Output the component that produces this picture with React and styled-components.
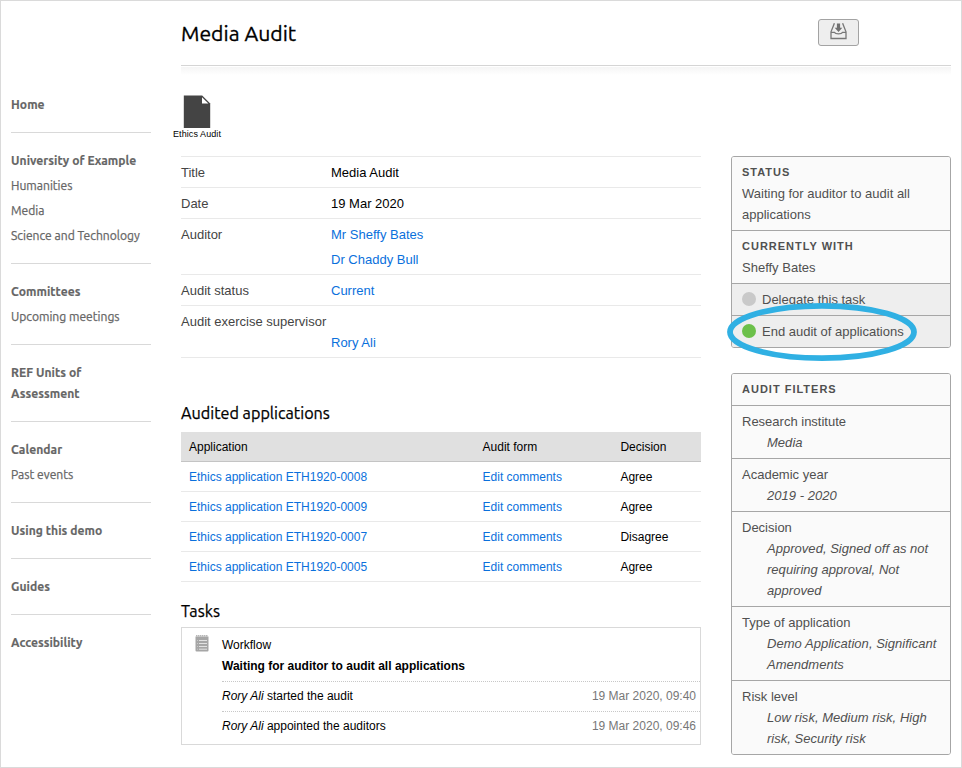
import React from "react";
import styled, { createGlobalStyle } from "styled-components";

const GlobalStyle = createGlobalStyle`
  *, *::before, *::after { box-sizing: border-box; }
  body {
    margin: 0;
    background: #fff;
    color: #000;
    font: 13px/21px "Liberation Sans", Arial, sans-serif;
  }
  a { color: #0a70dc; text-decoration: none; }
`;

const humanist = `Ubuntu, "Open Sans", "Noto Sans", sans-serif`;

const Page = styled.div`
  display: grid;
  grid-template-columns: 140px 770px;
  column-gap: 30px;
  width: 962px;
  height: 768px;
  padding-left: 10px;
  border: 1px solid #dadada;
  overflow: hidden;
`;

/* ---- Navigation ---- */

const Nav = styled.nav`
  padding-top: 93px;
  color: #666;
  font-family: ${humanist};
  font-size: 12.1px;
`;

const NavGroup = styled.section`
  display: flex;
  flex-direction: column;
  gap: 4px;
  padding-bottom: 17px;

  & + & {
    padding-top: 17px;
    border-top: 1px solid #d9d9d9;
  }
`;

const NavTitle = styled.strong`
  max-width: 130px;
  font-weight: 700;
  letter-spacing: 0.04px;
  -webkit-text-stroke: 0.15px;
`;

const NavItem = styled.span`
  white-space: nowrap;
  -webkit-text-stroke: 0.25px;
`;

/* ---- Page header ---- */

const Content = styled.div`
  display: flex;
  flex-direction: column;
`;

const Header = styled.header`
  display: flex;
  justify-content: space-between;
  align-items: center;
  height: 65px;
  padding-right: 92px;
  border-bottom: 1px solid #d5d5d5;
`;

const PageTitle = styled.h1`
  margin: 0;
  padding-bottom: 1px;
  font: 400 21.2px/28px ${humanist};
  -webkit-text-stroke: 0.3px;
`;

const HeaderShade = styled.div`
  height: 8px;
  margin-top: 1px;
  background: linear-gradient(#f5f5f5, #fff);
`;

const ArchiveButton = styled.button`
  display: flex;
  justify-content: center;
  align-items: flex-start;
  width: 41px;
  height: 27px;
  margin-top: -1px;
  padding: 3px 0 0;
  border: 1px solid #a3a3a3;
  border-radius: 3px;
  background: #eee;
`;

const Badge = styled.figure`
  display: flex;
  flex-direction: column;
  align-items: center;
  width: 50px;
  height: 81px;
  margin: 0 0 0 -9px;
  padding-top: 20px;
  font-size: 9px;
  line-height: 12px;
  letter-spacing: 0.08px;
  white-space: nowrap;
`;

const Columns = styled.div`
  display: grid;
  grid-template-columns: 520px 220px;
  justify-content: space-between;
`;

/* ---- Details ---- */

const Details = styled.dl`
  margin: 0;
  border-top: 1px solid #e9e9e9;
`;

const Detail = styled.div`
  display: grid;
  grid-template-columns: ${(p) => (p.$stacked ? "1fr" : "150px 1fr")};
  padding: 5px 0 4px;
  border-bottom: 1px solid #e9e9e9;
`;

const Term = styled.dt`
  color: #444;
`;

const Value = styled.dd`
  display: flex;
  flex-direction: column;
  gap: 4px;
  margin: 0 0 0 ${(p) => (p.$indent ? "150px" : "0")};
`;

const SectionTitle = styled.h2`
  margin: ${(p) => p.$top}px 0 ${(p) => p.$bottom}px;
  font: 400 16.2px/22px ${humanist};
  -webkit-text-stroke: 0.25px;
`;

/* ---- Applications table ---- */

const Table = styled.div`
  font-size: 12px;
`;

const TableRow = styled.div`
  display: grid;
  grid-template-columns: 293.6px 137.8px 1fr;
  height: 30px;
  padding: 1px 0 0 8px;
  line-height: 28px;
  border-bottom: 1px solid ${(p) => (p.$head ? "#c4c4c4" : "#e9e9e9")};
  background: ${(p) => (p.$head ? "#e0e0e0" : "transparent")};
`;

/* ---- Tasks ---- */

const TaskBox = styled.section`
  display: grid;
  grid-template-columns: 40px 1fr;
  height: 118px;
  padding-top: 6px;
  border: 1px solid #d9d9d9;
  font-size: 12px;
`;

const TaskIcon = styled.div`
  padding: 1px 0 0 12.5px;
`;

const TaskHeading = styled.div`
  padding: 1px 0 4px;
`;

const LogLine = styled.div`
  display: flex;
  justify-content: space-between;
  padding: 4px 4px 4px 0;
  border-top: 1px dotted #c8c8c8;
`;

const Stamp = styled.time`
  color: #777;
`;

/* ---- Side panels ---- */

const Aside = styled.aside`
  display: flex;
  flex-direction: column;
  gap: 25px;
  color: #505050;
`;

const Panel = styled.section`
  border: 1px solid #a6a6a6;
  border-radius: 3px;
  overflow: hidden;
`;

const PanelRow = styled.div`
  padding: 5px 10px;
  background: #fafafa;

  & + & { border-top: 1px solid #a6a6a6; }
`;

const PanelTitle = styled.h3`
  margin: 0;
  font-size: 11px;
  line-height: 21px;
  letter-spacing: 1px;
  text-transform: uppercase;
`;

const FilterValue = styled.div`
  padding-left: 25px;
  margin-right: -6px;
  font-style: italic;
  letter-spacing: 0.03px;
`;

const Action = styled(PanelRow)`
  display: flex;
  align-items: center;
  gap: 6px;
  background: #eee;
`;

const Dot = styled.span`
  width: 14px;
  height: 14px;
  margin-top: -1px;
  border-radius: 50%;
  background: ${(p) => p.$color};
`;

const StatusWrap = styled.div`
  position: relative;
`;

const Highlight = styled.svg`
  position: absolute;
  left: -5px;
  bottom: -14px;
  pointer-events: none;
`;

const navGroups = [
  ["Home"],
  ["University of Example", "Humanities", "Media", "Science and Technology"],
  ["Committees", "Upcoming meetings"],
  ["REF Units of Assessment"],
  ["Calendar", "Past events"],
  ["Using this demo"],
  ["Guides"],
  ["Accessibility"],
];

const applications = [
  ["ETH1920-0008", "Agree"],
  ["ETH1920-0009", "Agree"],
  ["ETH1920-0007", "Disagree"],
  ["ETH1920-0005", "Agree"],
];

const filters = [
  ["Research institute", "Media"],
  ["Academic year", "2019 - 2020"],
  ["Decision", "Approved, Signed off as not requiring approval, Not approved"],
  ["Type of application", "Demo Application, Significant Amendments"],
  ["Risk level", "Low risk, Medium risk, High risk, Security risk"],
];

const InboxIcon = () => (
  <svg width="17" height="17" viewBox="0 0 17 17" fill="none" stroke="#777" strokeWidth="1.3">
    <path d="M4.4 0.2 L1 8.8 V15.5 H16 V8.8 L12.6 0.2" />
    <path d="M1 9.4 H4.4 C5.6 11.4 11.4 11.4 12.6 9.4 H16" />
    <path d="M6.9 0.6 H10.1 V4.8 H12.3 L8.5 9 L4.7 4.8 H6.9 Z" fill="#707070" stroke="none" />
  </svg>
);

const DocumentIcon = () => (
  <svg width="28" height="33" viewBox="0 0 28 33">
    <path d="M0.8 0.5 H19.2 L27.2 8.5 V33 H0.8 Z" fill="#444" />
    <path d="M19 2.2 V8.6 H25.4 Z" fill="#fff" />
  </svg>
);

const NotepadIcon = () => (
  <svg width="14" height="17" viewBox="0 0 14 17">
    <path d="M0.5 1.5 H13.5 V15.5 Q13.5 16.5 12.5 16.5 H1.5 Q0.5 16.5 0.5 15.5 Z" fill="#a6a6a6" />
    <path d="M1.2 0.8 H13" stroke="#a6a6a6" strokeWidth="1.6" strokeDasharray="1.2 0.8" />
    <path d="M4 5.5 H12 M4 8.5 H12 M4 11.5 H12 M4 14.2 H12" stroke="#f0f0f0" strokeWidth="0.8" />
    <path d="M2 5.5 H3 M2 8.5 H3 M2 11.5 H3 M2 14.2 H3" stroke="#d0d0d0" strokeWidth="0.8" />
  </svg>
);

export default function App() {
  return (
    <Page>
      <GlobalStyle />
      <Nav>
        {navGroups.map(([title, ...items]) => (
          <NavGroup key={title}>
            <NavTitle>{title}</NavTitle>
            {items.map((item) => (
              <NavItem key={item}>{item}</NavItem>
            ))}
          </NavGroup>
        ))}
      </Nav>

      <Content>
        <Header>
          <PageTitle>Media Audit</PageTitle>
          <ArchiveButton aria-label="Archive">
            <InboxIcon />
          </ArchiveButton>
        </Header>
        <HeaderShade />
        <Badge>
          <DocumentIcon />
          <figcaption>Ethics Audit</figcaption>
        </Badge>

        <Columns>
          <main>
            <Details>
              <Detail>
                <Term>Title</Term>
                <Value>Media Audit</Value>
              </Detail>
              <Detail>
                <Term>Date</Term>
                <Value>19 Mar 2020</Value>
              </Detail>
              <Detail>
                <Term>Auditor</Term>
                <Value>
                  <a>Mr Sheffy Bates</a>
                  <a>Dr Chaddy Bull</a>
                </Value>
              </Detail>
              <Detail>
                <Term>Audit status</Term>
                <Value>
                  <a>Current</a>
                </Value>
              </Detail>
              <Detail $stacked>
                <Term>Audit exercise supervisor</Term>
                <Value $indent>
                  <a>Rory Ali</a>
                </Value>
              </Detail>
            </Details>

            <SectionTitle $top={44} $bottom={8}>Audited applications</SectionTitle>
            <Table>
              <TableRow $head>
                <span>Application</span>
                <span>Audit form</span>
                <span>Decision</span>
              </TableRow>
              {applications.map(([id, decision]) => (
                <TableRow key={id}>
                  <a>Ethics application {id}</a>
                  <a>Edit comments</a>
                  <span>{decision}</span>
                </TableRow>
              ))}
            </Table>

            <SectionTitle $top={18} $bottom={5}>Tasks</SectionTitle>
            <TaskBox>
              <TaskIcon>
                <NotepadIcon />
              </TaskIcon>
              <div>
                <TaskHeading>
                  <div>Workflow</div>
                  <strong>Waiting for auditor to audit all applications</strong>
                </TaskHeading>
                <LogLine>
                  <span><em>Rory Ali</em> started the audit</span>
                  <Stamp>19 Mar 2020, 09:40</Stamp>
                </LogLine>
                <LogLine>
                  <span><em>Rory Ali</em> appointed the auditors</span>
                  <Stamp>19 Mar 2020, 09:46</Stamp>
                </LogLine>
              </div>
            </TaskBox>
          </main>

          <Aside>
            <StatusWrap>
              <Panel>
                <PanelRow>
                  <PanelTitle>Status</PanelTitle>
                  Waiting for auditor to audit all applications
                </PanelRow>
                <PanelRow>
                  <PanelTitle>Currently with</PanelTitle>
                  Sheffy Bates
                </PanelRow>
                <Action>
                  <Dot $color="#c9c9c9" />
                  Delegate this task
                </Action>
                <Action>
                  <Dot $color="#6cc04a" />
                  End audit of applications
                </Action>
              </Panel>
              <Highlight width="192" height="60" viewBox="0 0 192 60">
                <ellipse cx="96" cy="30" rx="92" ry="26.2" fill="none" stroke="#30b0e3" strokeWidth="5.8" />
              </Highlight>
            </StatusWrap>

            <Panel>
              <PanelRow>
                <PanelTitle>Audit filters</PanelTitle>
              </PanelRow>
              {filters.map(([name, value]) => (
                <PanelRow key={name}>
                  {name}
                  <FilterValue>{value}</FilterValue>
                </PanelRow>
              ))}
            </Panel>
          </Aside>
        </Columns>
      </Content>
    </Page>
  );
}
